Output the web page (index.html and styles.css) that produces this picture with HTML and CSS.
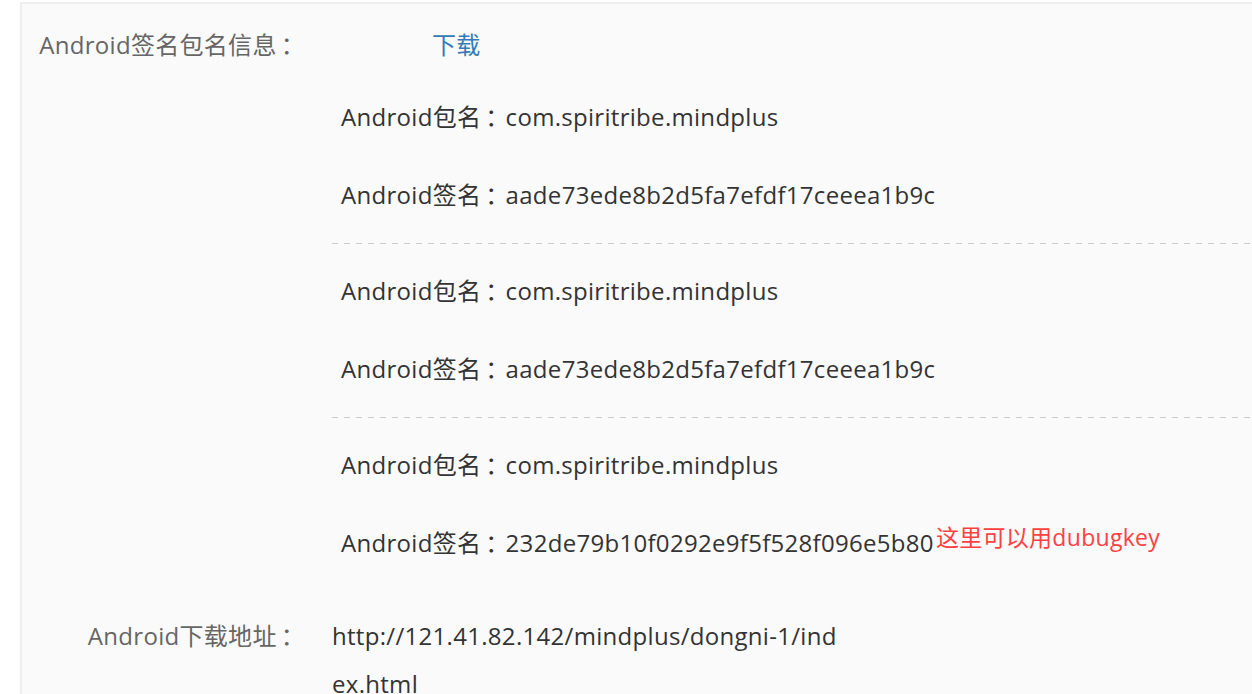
FILE: index.html
```html
<!DOCTYPE html>
<html lang="zh-CN">
<head>
<meta charset="utf-8">
<title>Android签名包名信息</title>
<link rel="stylesheet" href="styles.css">
</head>
<body>
<div class="panel">
  <div class="field">
    <div class="label">Android签名包名信息<span class="colon">：</span></div>
    <div class="value">
      <div class="download-row"><a class="download" href="#">下载</a></div>
      <div class="group">
        <p class="item">Android包名<span class="colon">：</span>com.spiritribe.mindplus</p>
        <p class="item">Android签名<span class="colon">：</span>aade73ede8b2d5fa7efdf17ceeea1b9c</p>
      </div>
      <div class="group dashed">
        <p class="item">Android包名<span class="colon">：</span>com.spiritribe.mindplus</p>
        <p class="item">Android签名<span class="colon">：</span>aade73ede8b2d5fa7efdf17ceeea1b9c</p>
      </div>
      <div class="group dashed">
        <p class="item">Android包名<span class="colon">：</span>com.spiritribe.mindplus</p>
        <p class="item">Android签名<span class="colon">：</span>232de79b10f0292e9f5f528f096e5b80<span class="note">这里可以用dubugkey</span></p>
      </div>
    </div>
  </div>
  <div class="field field-url">
    <div class="label">Android下载地址<span class="colon">：</span></div>
    <div class="value url">http://121.41.82.142/mindplus/dongni-1/index.html</div>
  </div>
</div>
</body>
</html>
```
FILE: styles.css
```css
html, body {
  margin: 0;
  padding: 0;
  background: #ffffff;
  overflow: hidden;
}
body {
  font-family: "Open Sans", "Noto Sans CJK JP", "Noto Sans CJK SC", sans-serif;
  font-size: 24px;
  line-height: 48px;
  letter-spacing: 0.3px;
  color: #333333;
}
.panel {
  margin: 2px 0 0 20px;
  width: 1300px;
  min-height: 760px;
  background: #fafafa;
  border: 2px solid #eeeeee;
  padding-top: 17px;
  box-sizing: border-box;
}
.field {
  display: flex;
  align-items: flex-start;
}
.field-url {
  margin-top: 21px;
}
.label {
  width: 279px;
  flex: none;
  text-align: right;
  color: #666666;
  white-space: nowrap;
}
.colon {
  padding-left: 4px;
  letter-spacing: -3.7px;
}
.value {
  margin-left: 31px;
  flex: 1;
}
.download-row {
  padding-left: 100px;
}
.download {
  color: #337ab7;
  text-decoration: none;
}
.group {
  padding: 24px 0 24px 9px;
  display: flex;
  flex-direction: column;
  gap: 30px;
}
.group.dashed {
  background-image: repeating-linear-gradient(to right, #cccccc 0 6px, transparent 6px 12px);
  background-size: 100% 1px;
  background-repeat: no-repeat;
  background-position: 0 0;
}
.item {
  margin: 0;
  white-space: nowrap;
}
.note {
  color: #ff4040;
  font-size: 23px;
  line-height: 24px;
  vertical-align: 6px;
  margin-left: 2px;
}
.url {
  flex: none;
  width: 515px;
  word-break: break-all;
}
```
